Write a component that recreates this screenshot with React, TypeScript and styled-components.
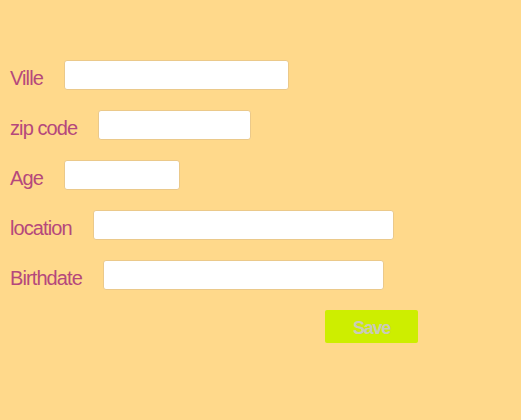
import React from "react";
import styled, { createGlobalStyle } from "styled-components";

const Global = createGlobalStyle`
  html, body { margin: 0; padding: 0; background: #ffd98b; }
  body { font-family: "Liberation Sans", Arial, sans-serif; }
`;

const Page = styled.div`
  width: 521px;
  height: 420px;
  background: #ffd98b;
  box-sizing: border-box;
  padding: 60px 10px 0 10px;
`;

const Form = styled.form`
  display: flex;
  flex-direction: column;
  gap: 20px;
`;

const Row = styled.div`
  display: flex;
  align-items: center;
  gap: 21px;
  height: 30px;
`;

const Label = styled.label`
  font-family: "Liberation Sans", Arial, sans-serif;
  font-size: 20px;
  letter-spacing: -0.9px;
  color: #b5487c;
  white-space: nowrap;
  padding-top: 6px;
`;

const Input = styled.input<{ $w: number }>`
  width: ${(p) => p.$w}px;
  height: 30px;
  box-sizing: border-box;
  background: #fff;
  border: 1px solid #ebc98a;
  border-radius: 3px;
  padding: 0 6px;
  outline: none;
`;

const Actions = styled.div`
  display: flex;
  padding-left: 315px;
`;

const SaveButton = styled.button`
  width: 93px;
  height: 33px;
  background: #cdee00;
  color: #c9cbb8;
  border: none;
  border-radius: 2px;
  font-family: "Liberation Sans", Arial, sans-serif;
  font-size: 18px;
  letter-spacing: -1.2px;
  font-weight: bold;
  padding: 3px 0 0;
`;

const fields = [
  { label: "Ville", w: 225 },
  { label: "zip code", w: 153 },
  { label: "Age", w: 116 },
  { label: "location", w: 301 },
  { label: "Birthdate", w: 281 },
];

export default function App() {
  return (
    <>
      <Global />
      <Page>
        <Form onSubmit={(e) => e.preventDefault()}>
          {fields.map((f) => (
            <Row key={f.label}>
              <Label>{f.label}</Label>
              <Input $w={f.w} type="text" />
            </Row>
          ))}
          <Actions>
            <SaveButton type="submit">Save</SaveButton>
          </Actions>
        </Form>
      </Page>
    </>
  );
}
